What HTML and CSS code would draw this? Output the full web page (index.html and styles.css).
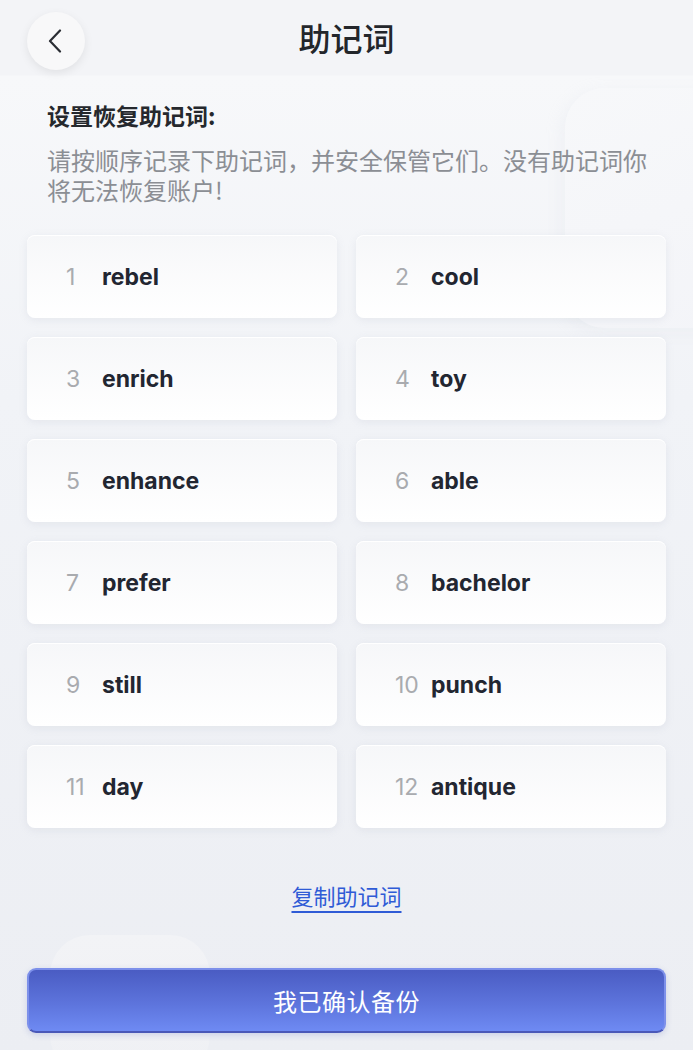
FILE: index.html
```html
<!DOCTYPE html>
<html lang="zh">
<head>
<meta charset="utf-8">
<title>助记词</title>
<link rel="stylesheet" href="styles.css">
</head>
<body>
<div class="page">
  <div class="bg-blob blob-right"></div>
  <div class="bg-blob blob-bottom"></div>
  <header class="header">
    <div class="back">
      <svg width="14" height="24" viewBox="0 0 14 24"><path d="M12 1.5 L2 12 L12 22.5" fill="none" stroke="#2a2d33" stroke-width="2.2" stroke-linecap="round" stroke-linejoin="round"/></svg>
    </div>
    <h1 class="title">助记词</h1>
    <div class="spacer"></div>
  </header>
  <main class="content">
    <h2 class="heading">设置恢复助记词:</h2>
    <p class="desc">请按顺序记录下助记词，并安全保管它们。没有助记词你将无法恢复账户!</p>
    <div class="grid">
      <div class="card"><span class="num">1</span><span class="word">rebel</span></div>
      <div class="card"><span class="num">2</span><span class="word">cool</span></div>
      <div class="card"><span class="num">3</span><span class="word">enrich</span></div>
      <div class="card"><span class="num">4</span><span class="word">toy</span></div>
      <div class="card"><span class="num">5</span><span class="word">enhance</span></div>
      <div class="card"><span class="num">6</span><span class="word">able</span></div>
      <div class="card"><span class="num">7</span><span class="word">prefer</span></div>
      <div class="card"><span class="num">8</span><span class="word">bachelor</span></div>
      <div class="card"><span class="num">9</span><span class="word">still</span></div>
      <div class="card"><span class="num">10</span><span class="word">punch</span></div>
      <div class="card"><span class="num">11</span><span class="word">day</span></div>
      <div class="card"><span class="num">12</span><span class="word">antique</span></div>
    </div>
    <div class="copy-wrap"><a class="copy" href="#">复制助记词</a></div>
    <button class="confirm">我已确认备份</button>
  </main>
</div>
</body>
</html>
```
FILE: styles.css
```css
* { box-sizing: border-box; }
html, body { margin: 0; padding: 0; }
body {
  width: 693px;
  height: 1050px;
  overflow: hidden;
  font-family: "Noto Sans CJK SC", "Noto Sans", sans-serif;
  background: #eef0f5;
}
.page {
  position: relative;
  width: 693px;
  height: 1050px;
  overflow: hidden;
  background: linear-gradient(180deg, #f3f4f7 0px, #f3f4f7 75px, #f7f8fa 76px, #f1f3f7 400px, #eceef3 1050px);
}
.bg-blob {
  position: absolute;
  border-radius: 40px;
  pointer-events: none;
}
.blob-right {
  left: 565px;
  top: 88px;
  width: 220px;
  height: 240px;
  background: linear-gradient(160deg, #f7f8fa, #f3f4f8);
  box-shadow: -4px 4px 16px rgba(210, 214, 226, 0.18);
}
.blob-bottom {
  left: 50px;
  top: 935px;
  width: 160px;
  height: 140px;
  background: linear-gradient(180deg, #f2f3f6, #eff0f4);
}
.header {
  position: relative;
  height: 76px;
  display: grid;
  grid-template-columns: 1fr auto 1fr;
  align-items: center;
  padding: 0 27px;
}
.back {
  width: 58px;
  height: 58px;
  border-radius: 50%;
  background: #f8f8f9;
  box-shadow: 0 3px 10px rgba(0, 0, 0, 0.08);
  display: flex;
  align-items: center;
  justify-content: center;
  margin-top: 6px;
}
.back svg { margin-left: -2px; }
.title {
  margin: 0;
  margin-top: -2px;
  font-size: 32px;
  font-weight: 500;
  color: #23262b;
  line-height: 40px;
}
.content {
  position: relative;
  padding: 24px 27px 0;
}
.heading {
  margin: 0 0 15px 20px;
  font-size: 23px;
  font-weight: 700;
  line-height: 30px;
  color: #25282d;
}
.desc {
  margin: 0 10px 30px 20px;
  font-size: 24px;
  line-height: 30px;
  color: #8b8e94;
}
.grid {
  display: grid;
  grid-template-columns: 310px 310px;
  column-gap: 19px;
  row-gap: 19px;
}
.card {
  height: 83px;
  border-radius: 8px;
  background: linear-gradient(180deg, #f6f7f9 0%, #ffffff 100%);
  box-shadow: 0 2px 8px rgba(150, 158, 180, 0.14), inset 0 1px 0 #ffffff;
  display: flex;
  align-items: center;
  padding-left: 39px;
}
.num {
  width: 36px;
  flex: none;
  font-family: Inter, "Noto Sans", sans-serif;
  font-size: 23px;
  font-weight: 400;
  color: #a9abaf;
}
.word {
  font-family: Inter, "Noto Sans", sans-serif;
  font-size: 23px;
  font-weight: 700;
  color: #222631;
}
.copy-wrap {
  margin-top: 52px;
  text-align: center;
  line-height: 30px;
}
.copy {
  font-size: 22px;
  color: #2f5bd6;
  text-decoration: underline;
  text-underline-offset: 6px;
  text-decoration-thickness: 2px;
}
.confirm {
  display: block;
  margin-top: 55px;
  width: 639px;
  height: 65px;
  border-radius: 9px;
  border: 2px solid #7d90ea;
  border-bottom-color: #4a58b8;
  background: linear-gradient(180deg, #4a5cc3 0%, #5d74dc 55%, #6e8af3 100%);
  color: #ffffff;
  font-family: "Noto Sans CJK SC", sans-serif;
  font-size: 24px;
  letter-spacing: 0.5px;
  box-shadow: 0 2px 6px rgba(70, 90, 180, 0.2);
}
```
